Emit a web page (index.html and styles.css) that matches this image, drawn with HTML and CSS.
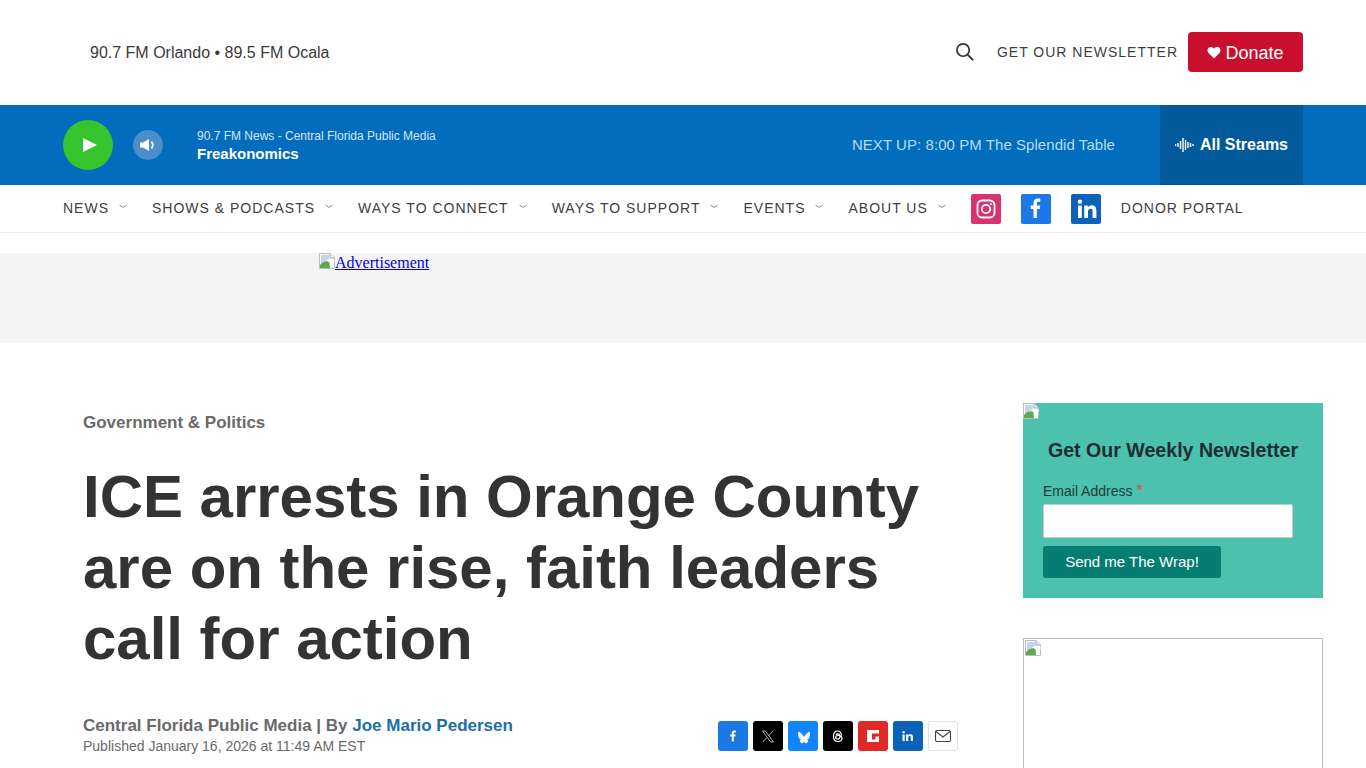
FILE: index.html
```html
<!DOCTYPE html>
<html lang="en">
<head>
    <meta charset="UTF-8">
    <meta name="viewport" content="width=device-width, initial-scale=1.0">
    <title>ICE arrests in Orange County are on the rise, faith leaders call for action</title>
    <link rel="stylesheet" href="styles.css">
</head>
<body>
    <svg class="defs" width="0" height="0">
        <defs>
            <symbol id="broken" viewBox="0 0 16 16">
                <path d="M.5.5h10.500l4.500 4.500v10.500H.5z" fill="#fff" stroke="#bbb"/>
                <path d="M11 .5v4.500h4.500" fill="#eee" stroke="#aaa"/>
                <path d="M2 2h8v4l-8 5z" fill="#c4d4ee"/>
                <path d="M1 15v-3c3-4 8-5 10-2l1 5z" fill="#5ea94c"/>
                <path d="M10.500 9l5-3v3l-3 6h-1.500z" fill="#fff"/>
            </symbol>
            <symbol id="chev" viewBox="0 0 8 5">
                <path d="M.5 1l3.500 2.500L7.500 1" fill="none" stroke="#888" stroke-width="1"/>
            </symbol>
        </defs>
    </svg>

    <header class="topbar">
        <div class="tagline">90.7 FM Orlando &bull; 89.5 FM Ocala</div>
        <div class="topbar_right">
            <svg class="search_icon" viewBox="0 0 20 20"><circle cx="8.500" cy="8.500" r="6.500" fill="none" stroke="#333" stroke-width="1.800"/><path d="M13.500 13.500L19 19" stroke="#333" stroke-width="2"/></svg>
            <a class="newsletter_link">GET OUR NEWSLETTER</a>
            <a class="donate_btn">
                <svg class="heart" viewBox="0 0 14 13"><path d="M7 12.500L1.500 7C-1.500 3.500 2.500-1.500 7 2.500 11.500-1.500 15.500 3.500 12.500 7z" fill="#fff"/></svg>
                Donate
            </a>
        </div>
    </header>

    <section class="player">
        <div class="play_btn"><svg viewBox="0 0 14 14" width="14" height="14"><path d="M0 0l14 7-14 7z" fill="#fff"/></svg></div>
        <div class="vol_btn">
            <svg viewBox="0 0 16 14" width="16" height="14"><path d="M0 4.500h3L9 1v12L3 9.500H0z" fill="#fff"/><path d="M11.500 3.500c1.500 2 1.500 5 0 7" fill="none" stroke="#fff" stroke-width="1.800"/></svg>
        </div>
        <div class="now_playing">
            <div class="station">90.7 FM News - Central Florida Public Media</div>
            <div class="show">Freakonomics</div>
        </div>
        <div class="next_up">NEXT UP: 8:00 PM The Splendid Table</div>
        <div class="streams">
            <svg viewBox="0 0 19 16" width="19" height="16"><path d="M.5 7v2M3 6v4M5.500 4v8M8 1v14M10.500 3v10M13 5v6M15.500 6v4M18 7v2" stroke="#fff" stroke-width="1.400"/></svg>
            All Streams
        </div>
    </section>

    <nav class="nav">
        <a class="nav_item">NEWS<svg class="chev"><use href="#chev"/></svg></a>
        <a class="nav_item">SHOWS &amp; PODCASTS<svg class="chev"><use href="#chev"/></svg></a>
        <a class="nav_item">WAYS TO CONNECT<svg class="chev"><use href="#chev"/></svg></a>
        <a class="nav_item">WAYS TO SUPPORT<svg class="chev"><use href="#chev"/></svg></a>
        <a class="nav_item">EVENTS<svg class="chev"><use href="#chev"/></svg></a>
        <a class="nav_item">ABOUT US<svg class="chev"><use href="#chev"/></svg></a>
        <div class="nav_social">
            <span class="nav_icon insta"><svg viewBox="0 0 30 30" width="30" height="30"><rect x="6.500" y="6.500" width="17" height="17" rx="4.500" fill="none" stroke="#fff" stroke-width="1.800"/><circle cx="15" cy="15" r="4.200" fill="none" stroke="#fff" stroke-width="1.800"/><circle cx="20" cy="10" r="1.100" fill="#fff"/></svg></span>
            <span class="nav_icon fb"><svg viewBox="0 0 30 30" width="30" height="30"><path d="M12.500 24v-9H9.700v-3.400h2.800V9c0-2.900 1.700-4.400 4.300-4.400 1.200 0 2.300.1 2.500.1v3h-1.800c-1.400 0-1.600.7-1.600 1.600v2.300h3.300l-.4 3.400h-2.900v9z" fill="#fff"/></svg></span>
            <span class="nav_icon li"><svg viewBox="0 0 30 30" width="30" height="30"><path d="M7 11.500h3.800V24H7zM8.900 5.500a2.200 2.200 0 110 4.400 2.200 2.200 0 010-4.400zM13.200 11.500h3.600v1.700c.6-1 1.900-2 3.800-2 4 0 4.800 2.600 4.800 6V24h-3.800v-6c0-1.500 0-3.300-2-3.300s-2.600 1.600-2.600 3.200V24h-3.800z" fill="#fff"/></svg></span>
        </div>
        <a class="nav_item donor">DONOR PORTAL</a>
    </nav>

    <div class="ad_band">
        <a class="ad_link"><svg class="broken_img"><use href="#broken"/></svg>Advertisement</a>
    </div>

    <main class="content">
        <article class="story">
            <div class="eyebrow">Government &amp; Politics</div>
            <h1 class="headline">ICE arrests in Orange County are on the rise, faith leaders call for action</h1>
            <div class="byline_row">
                <div class="byline">
                    <div class="byline_top">Central Florida Public Media | By <a class="author">Joe Mario Pedersen</a></div>
                    <div class="published">Published January 16, 2026 at 11:49 AM EST</div>
                </div>
                <div class="share">
                    <span class="share_btn s_fb"><svg viewBox="0 0 30 30" width="30" height="30"><path d="M13.800 20.500v-5h-1.600v-2h1.600v-1.400c0-1.700 1-2.600 2.500-2.600l1.500.1v1.800h-1c-.8 0-1 .4-1 1v1.100h1.900l-.3 2h-1.600v5z" fill="#fff"/></svg></span>
                    <span class="share_btn s_dark"><svg viewBox="0 0 30 30" width="30" height="30"><path d="M9.500 10h2.800l8.200 11h-2.800zM20 10l-4.500 4.900M14 16.500L9.700 21" fill="none" stroke="#ddd" stroke-width=".8"/></svg></span>
                    <span class="share_btn s_sky"><svg viewBox="0 0 30 30" width="30" height="30"><path transform="translate(3.300 3.800) scale(.85)" d="M15 14.300c-.7-1.400-2.700-4-4.500-5.300-1.800-1.200-2.500-1-2.500 1.100 0 .9.500 4.200.9 5 .6 1.800 2.500 2.300 4.100 2-3 .5-3.600 2-2 3.600 3 3 4-1 4-1.700 0 .7 1 4.700 4 1.700 1.600-1.600 1-3.100-2-3.600 1.600.3 3.500-.2 4.100-2 .4-.8.900-4.100.9-5 0-2.100-.7-2.300-2.500-1.100-1.800 1.300-3.800 3.900-4.500 5.300z" fill="#fff"/></svg></span>
                    <span class="share_btn s_dark"><svg viewBox="0 0 30 30" width="30" height="30"><path d="M18.500 14.500c-.3-3-2-4.500-3.800-4.500-2.500 0-4.200 2-4.200 5.200s1.800 5.300 4.500 5.300c2.300 0 4-1.300 4-3.200 0-2-1.700-2.800-3.800-2.800-1.500 0-2.500.7-2.500 1.800 0 1 .9 1.700 2 1.700 1.500 0 2.300-1 2.300-2.500 0-1.600-.8-2.600-2.100-2.600-.9 0-1.500.4-1.900 1" fill="none" stroke="#fff" stroke-width="1.200"/></svg></span>
                    <span class="share_btn s_red"><svg viewBox="0 0 30 30" width="30" height="30"><path d="M9 9h12v12H9z" fill="#fff"/><path d="M14 12.500h7v3h-3.500v3H14z" fill="#e12828"/></svg></span>
                    <span class="share_btn s_li"><svg viewBox="0 0 30 30" width="30" height="30"><path d="M9.500 13.500h2.200V20H9.500zM10.600 10a1.200 1.200 0 110 2.500 1.200 1.200 0 010-2.500zM13 13.500h2.100v.9c.4-.6 1.100-1.100 2.200-1.100 2.300 0 2.700 1.500 2.700 3.400V20h-2.200v-3.200c0-.8 0-1.800-1.100-1.800s-1.500.8-1.500 1.700V20H13z" fill="#fff"/></svg></span>
                    <span class="share_btn s_mail"><svg viewBox="0 0 30 30" width="30" height="30"><rect x="7.500" y="9.500" width="15" height="11" rx="1.500" fill="none" stroke="#444" stroke-width="1.100"/><path d="M8 10.500l7 5.500 7-5.500" fill="none" stroke="#444" stroke-width="1.100"/></svg></span>
                </div>
            </div>
        </article>

        <aside class="sidebar">
            <div class="signup">
                <svg class="broken_img signup_img"><use href="#broken"/></svg>
                <h2 class="signup_title">Get Our Weekly Newsletter</h2>
                <label class="signup_label">Email Address <span class="req">*</span></label>
                <input class="signup_input" type="text">
                <button class="signup_btn">Send me The Wrap!</button>
            </div>
            <div class="side_ad"><svg class="broken_img"><use href="#broken"/></svg></div>
        </aside>
    </main>
</body>
</html>
```

FILE: styles.css
```css
html, body {
    margin: 0;
    height: 768px;
    overflow: hidden;
}

body {
    font-family: "Liberation Sans", Arial, sans-serif;
    color: #333;
    background: #fff;
}

.defs {
    position: absolute;
}

.broken_img {
    width: 16px;
    height: 16px;
    display: block;
}

/* top white bar */
.topbar {
    height: 105px;
    display: flex;
    justify-content: space-between;
    align-items: center;
    padding: 0 63px 0 90px;
}

.tagline {
    font-size: 16px;
    color: #3a3a3a;
}

.topbar_right {
    display: flex;
    align-items: center;
    margin-bottom: 2px;
}

.search_icon {
    width: 19px;
    height: 19px;
    margin-right: 23px;
}

.newsletter_link {
    font-size: 14px;
    letter-spacing: 1px;
    color: #404040;
    margin-right: 10px;
}

.donate_btn {
    width: 115px;
    height: 40px;
    box-sizing: border-box;
    padding-top: 3px;
    background: #c8102e;
    border-radius: 4px;
    color: #fff;
    font-size: 18px;
    display: flex;
    align-items: center;
    justify-content: center;
    gap: 4px;
}

.heart {
    width: 14px;
    height: 13px;
    margin-top: -2px;
}

/* player */
.player {
    height: 80px;
    background: #036dbd;
    display: flex;
    align-items: center;
    padding: 0 63px;
    color: #fff;
}

.play_btn {
    width: 50px;
    height: 50px;
    border-radius: 50%;
    background: #36c52f;
    display: flex;
    align-items: center;
    justify-content: center;
    margin-right: 20px;
    padding-left: 4px;
    box-sizing: border-box;
}

.vol_btn {
    width: 30px;
    height: 30px;
    border-radius: 50%;
    background: #4a8fcb;
    display: flex;
    align-items: center;
    justify-content: center;
    margin-right: 34px;
}

.now_playing {
    flex: 1;
}

.station {
    font-size: 12px;
    line-height: 14px;
    color: #d5e6f5;
    margin-top: 1px;
    margin-bottom: 2px;
}

.show {
    font-size: 15px;
    font-weight: bold;
    line-height: 18px;
}

.next_up {
    font-size: 15px;
    letter-spacing: 0.06px;
    color: #b5dcf7;
    margin-right: 45px;
    margin-bottom: 2px;
}

.streams {
    width: 143px;
    height: 80px;
    background: #035a9b;
    display: flex;
    align-items: center;
    justify-content: center;
    gap: 6px;
    font-size: 16px;
    font-weight: bold;
}

/* nav */
.nav {
    height: 47px;
    border-bottom: 1px solid #f0f0f0;
    display: flex;
    align-items: center;
    padding-left: 63px;
}

.nav_item {
    font-size: 14px;
    letter-spacing: 1px;
    color: #404040;
    display: flex;
    align-items: center;
    margin-right: 25px;
    margin-bottom: 2px;
}

.chev {
    width: 8px;
    height: 5px;
    margin-left: 10px;
    margin-top: -3px;
}

.nav_social {
    display: flex;
    gap: 20px;
    margin-right: 20px;
}

.nav_icon {
    width: 30px;
    height: 30px;
    border-radius: 2px;
    display: block;
}

.insta { background: #d8336f; }
.fb { background: #1b78e6; }
.li { background: #0c62b8; }

.ad_band {
    margin-top: 20px;
    height: 90px;
    background: #f4f4f4;
    padding-left: 319px;
    font-family: "Liberation Serif", "Times New Roman", serif;
    font-size: 16px;
    line-height: 20px;
}

.ad_link {
    display: inline-flex;
    align-items: flex-start;
    color: #0000ee;
    text-decoration: underline;
}

/* article */
.content {
    display: flex;
    justify-content: space-between;
    padding: 60px 43px 0 83px;
}

.story {
    width: 875px;
    padding-top: 10px;
}

.eyebrow {
    font-size: 17px;
    font-weight: bold;
    color: #6a6a6a;
    line-height: 20px;
}

.headline {
    margin: 28px 0 0;
    font-size: 60px;
    line-height: 71px;
    letter-spacing: -0.03px;
    font-weight: bold;
    color: #333;
}

.byline_row {
    display: flex;
    justify-content: space-between;
    align-items: center;
    margin-top: 41px;
}

.byline_top {
    font-size: 17px;
    font-weight: bold;
    color: #6a6a6a;
    line-height: 22px;
}

.author {
    color: #1a6fa8;
}

.published {
    font-size: 14px;
    color: #6a6a6a;
    line-height: 18px;
}

.share {
    display: flex;
    gap: 5px;
    margin-top: 2px;
}

.share_btn {
    width: 30px;
    height: 30px;
    border-radius: 3px;
    display: block;
}

.s_fb { background: #1b78e6; }
.s_dark { background: #000; }
.s_sky { background: #1185fe; }
.s_red { background: #e12828; }
.s_li { background: #0c62b8; }
.s_mail {
    background: #fff;
    box-shadow: inset 0 0 0 1px #e2e2e2;
}

/* right column */
.sidebar {
    width: 300px;
}

.signup {
    background: #4cc1ae;
    height: 195px;
    box-sizing: border-box;
    padding: 0 20px;
    position: relative;
}

.signup_img {
    position: absolute;
    left: 0;
    top: 0;
}

.signup_title {
    margin: 0;
    padding-top: 35px;
    text-align: center;
    font-size: 19.6px;
    line-height: 24px;
    color: #1f2d33;
}

.signup_label {
    display: block;
    margin-top: 21px;
    font-size: 14px;
    line-height: 16px;
    color: #1f3c3c;
}

.req {
    color: #d9534f;
    font-size: 17px;
    line-height: 14px;
}

.signup_input {
    display: block;
    width: 250px;
    height: 34px;
    box-sizing: border-box;
    margin-top: 5px;
    border: 1px solid #ccc;
    border-radius: 2px;
    background: #fff;
}

.signup_btn {
    display: block;
    width: 178px;
    height: 32px;
    margin-top: 8px;
    padding-bottom: 3px;
    border: 0;
    border-radius: 3px;
    background: #067d71;
    color: #fff;
    font-family: inherit;
    font-size: 15px;
}

.side_ad {
    margin-top: 40px;
    height: 250px;
    border: 1px solid #bbb;
    box-sizing: border-box;
    padding: 1px;
}
```
